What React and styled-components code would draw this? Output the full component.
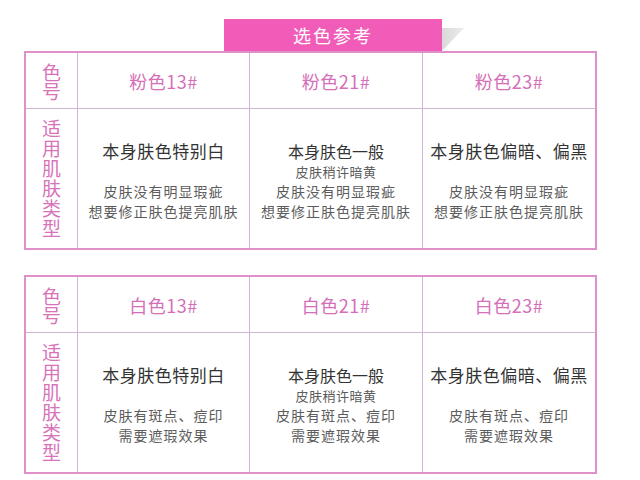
import React from "react";
import styled, { createGlobalStyle } from "styled-components";

const GlobalStyle = createGlobalStyle`
  html, body {
    margin: 0;
    padding: 0;
    background: #ffffff;
  }
  body {
    font-family: "Noto Sans CJK SC", "Noto Sans", sans-serif;
  }
`;

const Page = styled.div`
  width: 640px;
  height: 480px;
  padding: 19px 0 0 24px;
  box-sizing: border-box;
  overflow: hidden;
`;

const TitleBar = styled.div`
  display: flex;
  align-items: flex-end;
  padding-left: 200px;
  height: 32px;
`;

const Banner = styled.div`
  width: 218px;
  height: 32px;
  background: #f25cb9;
  color: #ffffff;
  font-size: 18px;
  letter-spacing: 2px;
  display: flex;
  align-items: center;
  justify-content: center;
`;

const Fold = styled.div`
  width: 22px;
  height: 23px;
  background: linear-gradient(90deg, #d9d9d9, #ececec);
  clip-path: polygon(0 0, 100% 0, 0 100%);
`;

const Table = styled.div`
  display: grid;
  grid-template-columns: 52px 172px 173px 172px;
  grid-template-rows: 56px 139px;
  width: 569px;
  border: 2px solid #df90c9;
  margin-bottom: ${(p) => p.$gap || 0}px;
`;

const Cell = styled.div`
  display: flex;
  flex-direction: column;
  align-items: center;
  justify-content: center;
  text-align: center;
  box-sizing: border-box;
  border-right: ${(p) => (p.$last ? "none" : "1px solid #d4b4d6")};
  border-bottom: ${(p) => (p.$bottom ? "none" : "1px solid #d4b4d6")};
  padding-top: ${(p) => p.$pt || 0}px;
  padding-bottom: ${(p) => p.$pb || 0}px;
`;

const Label = styled.div`
  width: 20px;
  font-size: 19px;
  line-height: ${(p) => p.$lh || 19}px;
  color: #d873b9;
  word-break: break-all;
`;

const Shade = styled.div`
  font-size: 18px;
  color: #d56fb8;
  letter-spacing: 0.5px;
`;

const Lead = styled.div`
  font-size: ${(p) => p.$size || 17}px;
  line-height: ${(p) => p.$lh || 20}px;
  color: #333333;
  letter-spacing: ${(p) => p.$ls ?? 0.5}px;
  margin-bottom: ${(p) => p.$mb || 0}px;
`;

const Note = styled.div`
  font-size: ${(p) => p.$size || 14}px;
  line-height: ${(p) => p.$lh || 20}px;
  color: #5c5c5c;
  letter-spacing: ${(p) => p.$ls ?? 1}px;
`;

const groups = [
  {
    prefix: "粉色",
    notes: ["皮肤没有明显瑕疵", "想要修正肤色提亮肌肤"],
  },
  {
    prefix: "白色",
    notes: ["皮肤有斑点、痘印", "需要遮瑕效果"],
  },
];

const codes = ["13#", "21#", "23#"];

function ShadeTable({ group, gap }) {
  return (
    <Table $gap={gap}>
      <Cell>
        <Label>色号</Label>
      </Cell>
      {codes.map((c, i) => (
        <Cell key={c} $last={i === 2}>
          <Shade>
            {group.prefix}
            {c}
          </Shade>
        </Cell>
      ))}
      <Cell $bottom $pb={2}>
        <Label $lh={20}>适用肌肤类型</Label>
      </Cell>
      <Cell $bottom $pt={4}>
        <Lead $mb={20}>本身肤色特别白</Lead>
        {group.notes.map((n) => (
          <Note key={n}>{n}</Note>
        ))}
      </Cell>
      <Cell $bottom $pt={4}>
        <Lead $size={16} $ls={0} $lh={22}>本身肤色一般</Lead>
        <Note $size={13} $ls={0.5} $lh={19}>皮肤稍许暗黄</Note>
        {group.notes.map((n) => (
          <Note key={n}>{n}</Note>
        ))}
      </Cell>
      <Cell $bottom $last $pt={4}>
        <Lead $mb={20}>本身肤色偏暗、偏黑</Lead>
        {group.notes.map((n) => (
          <Note key={n}>{n}</Note>
        ))}
      </Cell>
    </Table>
  );
}

export default function App() {
  return (
    <>
      <GlobalStyle />
      <Page>
        <TitleBar>
          <Banner>选色参考</Banner>
          <Fold />
        </TitleBar>
        <ShadeTable group={groups[0]} gap={25} />
        <ShadeTable group={groups[1]} />
      </Page>
    </>
  );
}
